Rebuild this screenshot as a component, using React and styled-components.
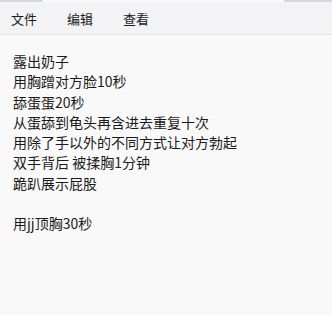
import React from 'react';
import styled, { createGlobalStyle } from 'styled-components';

const GlobalStyle = createGlobalStyle`
  html, body {
    margin: 0;
    padding: 0;
    background: #f9f9f9;
  }
  body {
    font-family: "Noto Sans CJK SC", "Noto Sans", sans-serif;
  }
`;

const lines = [
  '露出奶子',
  '用胸蹭对方脸10秒',
  '舔蛋蛋20秒',
  '从蛋舔到龟头再含进去重复十次',
  '用除了手以外的不同方式让对方勃起',
  '双手背后 被揉胸1分钟',
  '跪趴展示屁股',
  '',
  '用jj顶胸30秒',
];

const Window = styled.div`
  width: 332px;
  height: 315px;
  display: flex;
  flex-direction: column;
  background: #f9f9f9;
  overflow: hidden;
`;

const TopStrip = styled.div`
  height: 2px;
  display: flex;
  justify-content: space-between;
`;

const TabEdge = styled.div`
  width: ${p => p.$w}px;
  height: 2px;
  background: #d4d7de;
  border-radius: ${p => (p.$side === 'left' ? '0 2px 2px 0' : '2px 0 0 2px')};
`;

const MenuBar = styled.div`
  height: 32px;
  display: flex;
  align-items: center;
  padding-left: 11px;
  gap: 30px;
  background: #f3f3f5;
  border-bottom: 1px solid #e5e5e8;
`;

const MenuItem = styled.span`
  font-size: 13px;
  color: #1b1b1b;
  line-height: 16px;
  margin-top: 2px;
`;

const Editor = styled.div`
  flex: 1;
  padding: 16px 13px 0;
  font-size: 14px;
  line-height: 20.3px;
  color: #1a1a1a;
`;

const Line = styled.div`
  height: 20.3px;
  white-space: pre;
`;

export default function App() {
  return (
    <Window>
      <GlobalStyle />
      <TopStrip>
        <TabEdge $w={43} $side="left" />
        <TabEdge $w={48} $side="right" />
      </TopStrip>
      <MenuBar>
        <MenuItem>文件</MenuItem>
        <MenuItem>编辑</MenuItem>
        <MenuItem>查看</MenuItem>
      </MenuBar>
      <Editor>
        {lines.map((l, i) => (
          <Line key={i}>{l}</Line>
        ))}
      </Editor>
    </Window>
  );
}
